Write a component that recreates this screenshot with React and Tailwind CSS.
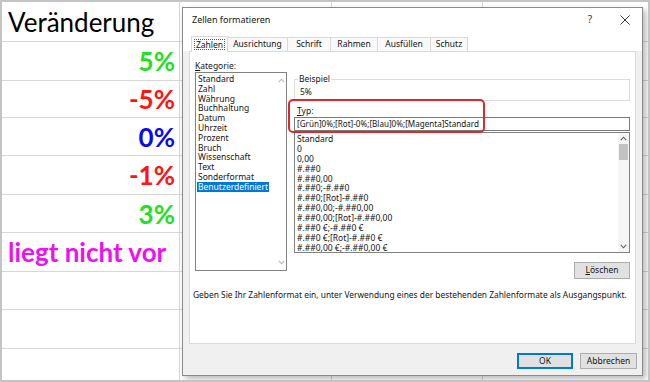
import React from 'react';

// Tabellenzeilen links (Spalte A)
const rows = [
  { h: 'h-[40px]', text: 'Veränderung', cls: 'justify-start font-normal text-black' },
  { h: 'h-[39px]', text: '5%', cls: 'justify-end font-bold text-[#22e022]' },
  { h: 'h-[37px]', text: '-5%', cls: 'justify-end font-bold text-[#ff1414]' },
  { h: 'h-[38px]', text: '0%', cls: 'justify-end font-bold text-[#0a0aee]' },
  { h: 'h-[39px]', text: '-1%', cls: 'justify-end font-bold text-[#ff1414]' },
  { h: 'h-[38px]', text: '3%', cls: 'justify-end font-bold text-[#22e022]' },
  { h: 'h-[39px]', text: 'liegt nicht vor', cls: 'justify-start font-bold text-[#ee10ee]' },
  { h: 'h-[38px]', text: '', cls: '' },
  { h: 'h-[39px]', text: '', cls: '' },
  { h: 'h-[38px]', text: '', cls: '' },
];

const kategorien = [
  'Standard', 'Zahl', 'Währung', 'Buchhaltung', 'Datum', 'Uhrzeit',
  'Prozent', 'Bruch', 'Wissenschaft', 'Text', 'Sonderformat', 'Benutzerdefiniert',
];

const formate = [
  'Standard', '0', '0,00', '#.##0', '#.##0,00', '#.##0;-#.##0',
  '#.##0;[Rot]-#.##0', '#.##0,00;-#.##0,00', '#.##0,00;[Rot]-#.##0,00',
  '#.##0 €;-#.##0 €', '#.##0 €;[Rot]-#.##0 €', '#.##0,00 €;-#.##0,00 €',
];

const tabs = [
  { label: 'Zahlen', w: 'w-[37px]' },
  { label: 'Ausrichtung', w: 'w-[60px]' },
  { label: 'Schrift', w: 'w-[43px]' },
  { label: 'Rahmen', w: 'w-[47px]' },
  { label: 'Ausfüllen', w: 'w-[53px]' },
  { label: 'Schutz', w: 'w-[37px]' },
];

function Chevron({ up, color = '#606060' }) {
  return (
    <svg width="7" height="5" viewBox="0 0 7 5">
      <path d={up ? 'M0.8 4.2 L3.5 1.2 L6.2 4.2' : 'M0.8 0.8 L3.5 3.8 L6.2 0.8'} fill="none" stroke={color} strokeWidth="1.1" />
    </svg>
  );
}

function Column({ w, children }) {
  return (
    <div className={`${w} shrink-0 border-r border-[#d6d6d6] flex flex-col`}>
      {rows.map((r, i) => (
        <div key={i} className={`${r.h} shrink-0 border-b border-[#d6d6d6]`}>{children ? children(r) : null}</div>
      ))}
    </div>
  );
}

export default function App() {
  return (
    <div className="relative w-[650px] h-[382px] overflow-hidden bg-white border-2 border-[#c4c4c4] font-['Lato',sans-serif]">
      {/* Tabellenblatt */}
      <div className="flex">
        <Column w="w-[178px]">
          {(r) => (
            <div className={`h-full flex items-center pl-[6px] pr-[4px] text-[26px] leading-none ${r.cls}`}>{r.text}</div>
          )}
        </Column>
        <Column w="w-[152px]" />
        <Column w="w-[151px]" />
        <Column w="w-[200px]" />
      </div>

      {/* Dialog Zellen formatieren */}
      <div className="absolute left-[180px] top-[5px] w-[461px] h-[369px] border border-[#8a8a8a] bg-[#f0f0f0] shadow-[3px_3px_6px_rgba(0,0,0,0.28)] flex flex-col font-['Noto_Sans',sans-serif] text-[8.5px] text-[#141414]">
        <div className="h-[23px] shrink-0 bg-white flex items-center pl-[9px] pr-[12px]">
          <span className="text-[9px]">Zellen formatieren</span>
          <span className="ml-auto mr-[28px] text-[10px] text-[#333]">?</span>
          <svg width="10" height="10" viewBox="0 0 10 10">
            <path d="M0.5 0.5 L9.5 9.5 M9.5 0.5 L0.5 9.5" stroke="#333" strokeWidth="1" />
          </svg>
        </div>

        <div className="h-[20px] shrink-0 flex items-end pl-[8px] bg-white">
          {tabs.map((t, i) =>
            i === 0 ? (
              <div key={t.label} className={`${t.w} h-[16px] -mb-px relative z-10 bg-white border border-b-0 border-[#d9d9d9] flex items-center justify-center`}>
                <span className="border border-dotted border-[#555] px-[1px] leading-[9px]">{t.label}</span>
              </div>
            ) : (
              <div key={t.label} className={`${t.w} h-[14px] bg-[#f9f9f9] border border-b-0 border-l-0 border-[#d9d9d9] flex items-center justify-center`}>
                {t.label}
              </div>
            )
          )}
        </div>

        <div className="mx-[6px] h-[293px] shrink-0 bg-white border border-[#d9d9d9] pt-[8px] px-[5px] flex flex-col">
          <div className="flex">
            {/* Kategorie */}
            <div className="w-[92px] shrink-0 flex flex-col">
              <div className="h-[12px] leading-[12px]"><span className="underline">K</span>ategorie:</div>
              <div className="h-[199px] border border-[#828282] flex">
                <div className="flex-1 pt-[1px] flex flex-col">
                  {kategorien.map((k) => (
                    <div key={k} className="h-[9.8px] leading-[9.8px] pl-[1px]">
                      <span className={k === 'Benutzerdefiniert' ? 'bg-[#0078d7] text-white px-[1px] inline-block' : 'px-[1px]'}>{k}</span>
                    </div>
                  ))}
                </div>
                <div className="w-[10px] flex flex-col justify-between items-center py-[5px]">
                  <Chevron up color="#b5b5b5" />
                  <Chevron color="#b5b5b5" />
                </div>
              </div>
            </div>

            {/* Rechte Seite */}
            <div className="ml-[7px] w-[337px] flex flex-col relative">
              <div className="mt-[19px] h-[22px] border border-[#dcdcdc] relative pl-[5px] pt-[7px] leading-[10px]">
                <span className="absolute -top-[7px] left-[3px] bg-white px-[1px] leading-[12px]">Beispiel</span>
                5%
              </div>
              <div className="mt-[4px] h-[12px] leading-[12px] pl-[3px]"><span className="underline">T</span>yp:</div>
              <div className="h-[14px] border border-[#7a7a7a] pl-[2px] leading-[12px] text-[8.1px] whitespace-nowrap">[Grün]0%;[Rot]-0%;[Blau]0%;[Magenta]Standard</div>
              {/* rote Markierung */}
              <div className="absolute left-[-6px] top-[39px] w-[197px] h-[34px] border-2 border-[#e3262b] rounded-[5px]" />
              <div className="mt-[1px] h-[121px] border border-[#828282] flex">
                <div className="flex-1 pt-[1px] pl-[2px] flex flex-col">
                  {formate.map((f, i) => (
                    <div key={i} className="h-[9.9px] leading-[9.9px] whitespace-nowrap">{f}</div>
                  ))}
                </div>
                <div className="w-[11px] bg-[#f5f5f5] flex flex-col items-center">
                  <div className="h-[11px] flex items-center"><Chevron up /></div>
                  <div className="w-[9px] h-[16px] bg-[#c2c2c2]" />
                  <div className="mt-auto h-[11px] flex items-center"><Chevron /></div>
                </div>
              </div>
              <div className="mt-[9px] flex justify-end">
                <div className="w-[56px] h-[17px] bg-[#e1e1e1] border border-[#adadad] flex items-center justify-center">
                  <span><span className="underline">L</span>öschen</span>
                </div>
              </div>
            </div>
          </div>
          <div className="mt-[10px] -ml-[2px] whitespace-nowrap text-[8.4px]">
            Geben Sie Ihr Zahlenformat ein, unter Verwendung eines der bestehenden Zahlenformate als Ausgangspunkt.
          </div>
        </div>

        <div className="flex justify-end gap-[7px] pr-[5px] pt-[9px]">
          <div className="w-[56px] h-[16px] bg-[#e1e1e1] border-2 border-[#0078d7] flex items-center justify-center">OK</div>
          <div className="w-[57px] h-[16px] bg-[#e1e1e1] border border-[#adadad] flex items-center justify-center">Abbrechen</div>
        </div>
      </div>
    </div>
  );
}
